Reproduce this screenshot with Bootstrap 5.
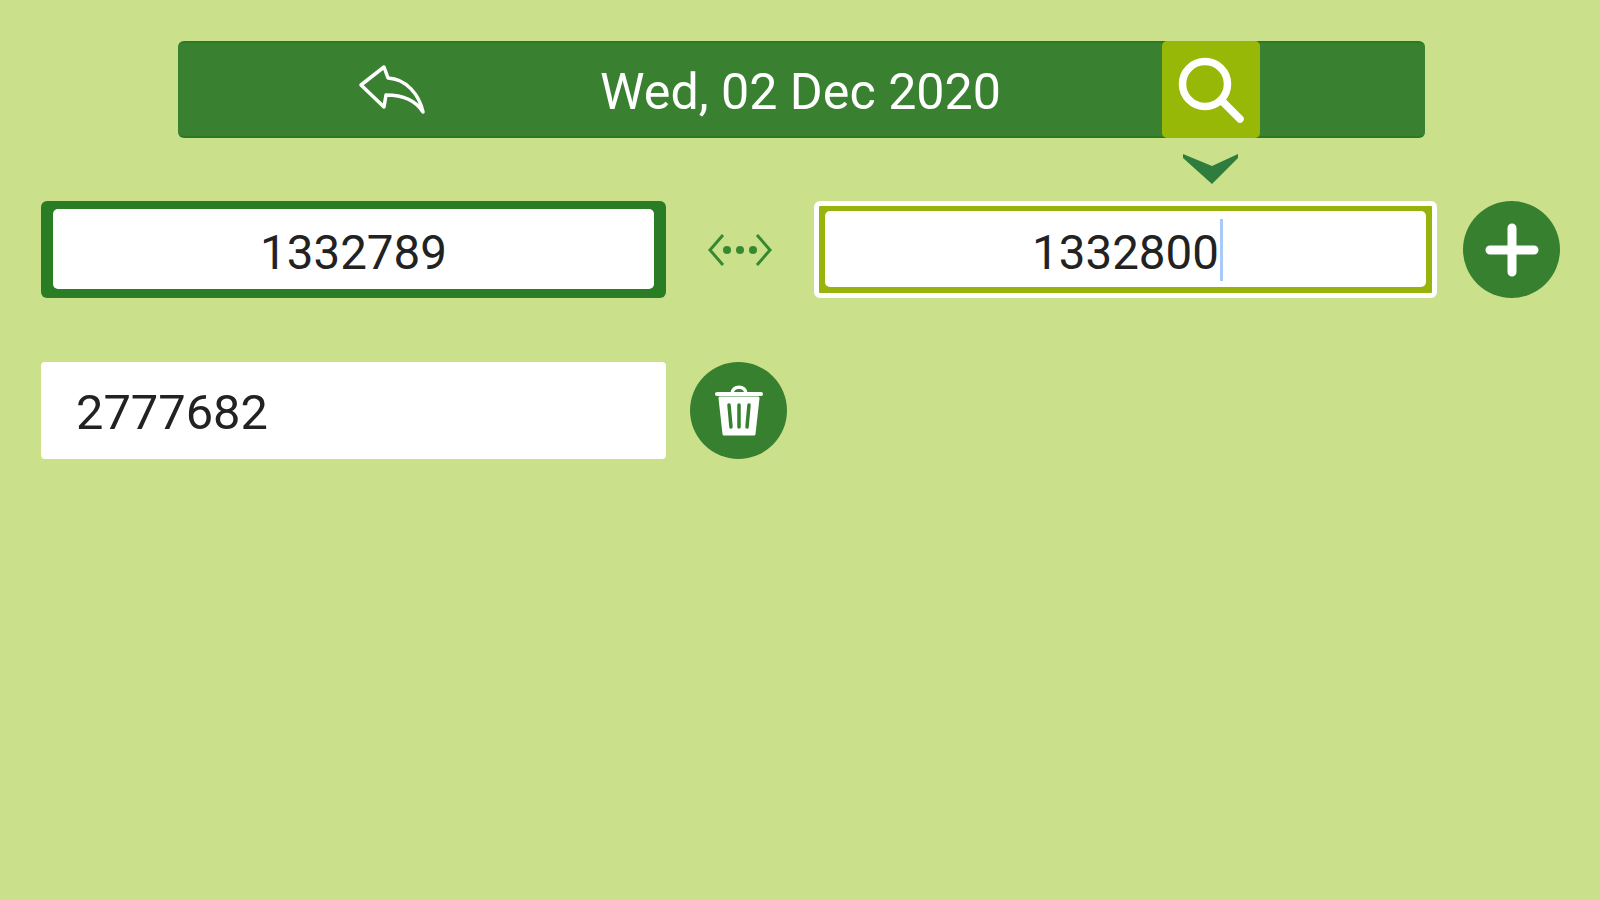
<!DOCTYPE html>
<html lang="en">
<head>
    <meta charset="UTF-8">
    <meta name="viewport" content="width=device-width, initial-scale=1.0">
    <title>Search</title>
    <link href="https://cdn.jsdelivr.net/npm/bootstrap@5.3.2/dist/css/bootstrap.min.css" rel="stylesheet">
    <style>
        body{
            background: #cbe08b;
            font-family: Roboto, "Liberation Sans", sans-serif;
            padding: 41px 39px 0 41px;
            height: 900px;
            overflow: hidden;
        }
        .top-bar{
            margin-left: 137px;
            width: 1247px;
            height: 97px;
            background: #3a8031;
            border-top: 2px solid #2a7a22;
            border-bottom: 2px solid #2a7a22;
            border-radius: 6px;
            color: #fff;
        }
        .back-slot{ width: 427px; }
        .date-text{ width: 400px; margin-left: -5px; font-size: 50.2px; line-height: 1; padding-top: 6px; white-space: nowrap; }
        .bar-gap{ width: 162px; }
        .search-btn{
            width: 98px;
            height: 97px;
            background: #98b807;
            border-radius: 5px;
        }
        .arrow-row{ height: 63px; padding-left: 1140px; padding-top: 15px; }
        .num-frame{ height: 97px; width: 625px; }
        .frame-current{ background: #2a7d25; border-radius: 6px; padding: 8px 12px 9px; }
        .frame-next{
            width: 623px;
            background: #98b40c;
            border: 5px solid #fff;
            border-radius: 6px;
            padding: 5px 6px 6px;
        }
        .num-box{
            height: 100%;
            background: #fff;
            border: 0;
            border-radius: 5px;
            font-size: 47.5px;
            line-height: 1;
            padding: 10px 0 0;
            color: #222;
        }
        .num-plain{ padding: 6px 0 0 35px; border-radius: 4px; font-size: 48.8px; }
        .range-slot{ width: 148px; }
        .round-btn{
            width: 97px;
            height: 97px;
            border-radius: 50%;
            background: #37802f;
        }
        .add-btn{ margin-left: 26px; }
        .del-btn{ margin-left: 24px; }
        .caret-mark{
            width: 3px;
            height: 62px;
            top: -11px;
            right: -4px;
            background: #a9c9f7;
        }
        .second-row{ margin-top: 64px; }
    </style>
</head>
<body>
<div class="top-bar d-flex align-items-center">
    <div class="back-slot d-flex justify-content-center">
        <svg width="68" height="52" viewBox="0 0 68 52" fill="none" stroke="#fff" stroke-width="3.5" stroke-linejoin="round">
            <path d="M3 21 26 3 30 14C48 15 61 30 65 48 58 37 46 31 28 31L26 43Z"/>
        </svg>
    </div>
    <div class="date-text text-center">Wed, 02 Dec 2020</div>
    <div class="bar-gap"></div>
    <div class="search-btn d-flex align-items-center justify-content-center">
        <svg width="70" height="70" viewBox="0 0 70 70" fill="none" stroke="#fff" stroke-width="7.5">
            <circle cx="29" cy="29" r="22.5"/>
            <path d="M45 45 64 64" stroke-linecap="round"/>
        </svg>
    </div>
</div>
<div class="arrow-row d-flex">
    <svg width="60" height="32" viewBox="0 0 60 32"><path d="M2 1 31 13 57 1V5L31 31 2 5Z" fill="#2e7d3c"/></svg>
</div>
<div class="d-flex">
    <div class="num-frame frame-current">
        <div class="form-control num-box d-flex align-items-center justify-content-center">1332789</div>
    </div>
    <div class="range-slot d-flex align-items-center justify-content-center">
        <svg width="64" height="34" viewBox="0 0 64 34" fill="none" stroke="#37892f" stroke-width="3">
            <path d="M15 2 2 17 15 32M49 2 62 17 49 32"/>
            <g fill="#37892f" stroke="none"><circle cx="19" cy="17" r="4"/><circle cx="32" cy="17" r="4"/><circle cx="45" cy="17" r="4"/></g>
        </svg>
    </div>
    <div class="num-frame frame-next">
        <div class="form-control num-box d-flex align-items-center justify-content-center"><span class="position-relative">1332800<span class="caret-mark position-absolute"></span></span></div>
    </div>
    <button type="button" class="btn p-0 round-btn add-btn d-flex align-items-center justify-content-center">
        <svg width="54" height="54" viewBox="0 0 54 54" stroke="#fff" stroke-width="9" stroke-linecap="round"><path d="M27 5V49M5 27H49"/></svg>
    </button>
</div>
<div class="d-flex second-row">
    <div class="num-frame">
        <div class="form-control num-box num-plain d-flex align-items-center">2777682</div>
    </div>
    <button type="button" class="btn p-0 round-btn del-btn d-flex align-items-center justify-content-center">
        <svg width="48" height="54" viewBox="0 0 48 54" fill="none">
            <path d="M17 10C17 1 31 1 31 10" stroke="#fff" stroke-width="3.5"/>
            <path d="M2 10H46" stroke="#fff" stroke-width="4" stroke-linecap="round"/>
            <path d="M5 14H43L39 50H9Z" fill="#fff" stroke="#fff" stroke-width="3" stroke-linejoin="round"/>
            <path d="M14 21 16 43M24 21V43M34 21 32 43" stroke="#37802f" stroke-width="3.5" stroke-linecap="round"/>
        </svg>
    </button>
</div>
</body>
</html>
